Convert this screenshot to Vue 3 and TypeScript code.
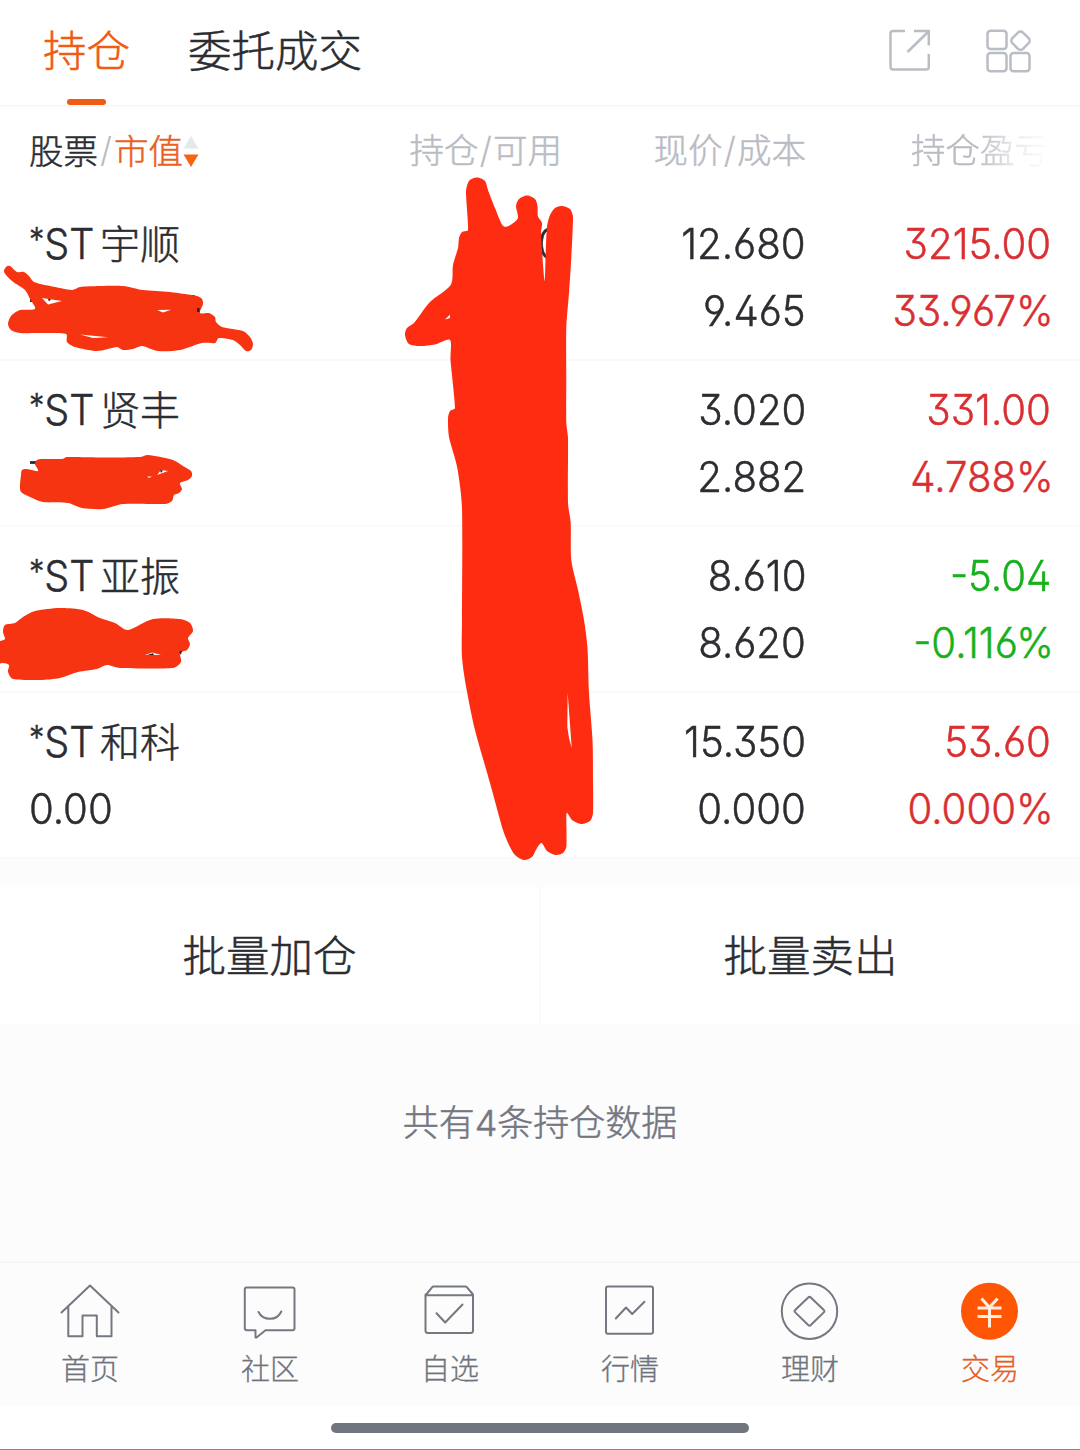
<script setup lang="ts">
interface Holding {
  name: string
  value: string
  qty: string
  price: string
  cost: string
  profit: string
  rate: string
  trend: 'up' | 'down'
}

type Point = [number, number]

const holdings: Holding[] = [
  { name: '宇顺', value: '', qty: '0', price: '12.680', cost: '9.465', profit: '3215.00', rate: '33.967%', trend: 'up' },
  { name: '贤丰', value: '', qty: '', price: '3.020', cost: '2.882', profit: '331.00', rate: '4.788%', trend: 'up' },
  { name: '亚振', value: '', qty: '', price: '8.610', cost: '8.620', profit: '-5.04', rate: '-0.116%', trend: 'down' },
  { name: '和科', value: '0.00', qty: '', price: '15.350', cost: '0.000', profit: '53.60', rate: '0.000%', trend: 'up' },
]

const tabs = [
  { key: 'home', label: '首页' },
  { key: 'community', label: '社区' },
  { key: 'watch', label: '自选' },
  { key: 'market', label: '行情' },
  { key: 'wealth', label: '理财' },
  { key: 'trade', label: '交易' },
]

// Closed Catmull-Rom curve through the points of a marker outline
function outline(flat: number[]): string {
  const p: Point[] = []
  for (let i = 0; i < flat.length; i += 2) p.push([flat[i], flat[i + 1]])
  const n = p.length
  const k = 7
  let d = `M${p[0][0]} ${p[0][1]}`
  for (let i = 0; i < n; i++) {
    const a = p[(i + n - 1) % n]
    const b = p[i]
    const c = p[(i + 1) % n]
    const e = p[(i + 2) % n]
    const len = Math.hypot(c[0] - b[0], c[1] - b[1])
    const t1 = Math.min(1, (2 * len) / Math.hypot(c[0] - a[0], c[1] - a[1]))
    const t2 = Math.min(1, (2 * len) / Math.hypot(e[0] - b[0], e[1] - b[1]))
    d += `C${b[0] + ((c[0] - a[0]) * t1) / k} ${b[1] + ((c[1] - a[1]) * t1) / k} ${c[0] - ((e[0] - b[0]) * t2) / k} ${c[1] - ((e[1] - b[1]) * t2) / k} ${c[0]} ${c[1]}`
  }
  return d + 'Z'
}

const column = outline([
  466, 192, 469, 181, 477, 177.5, 485, 181, 488, 190, 495, 208, 504, 226.5, 517.5, 219, 516, 206, 519, 199, 527, 195.5, 535, 199, 537.5, 206,
  538, 216.5, 542, 223, 541, 233, 544.5, 281, 545.7, 253, 547, 227, 550, 215, 555, 208, 562, 206, 570, 209, 573, 217,
  571, 263, 569, 293, 566.3, 328, 566.3, 380, 566.3, 423, 568, 438, 568, 503, 570.7, 523, 571.3, 560, 578, 590, 584, 620,
  587.5, 648, 589, 693, 592.5, 740, 593, 780, 593, 813, 590, 821, 581, 824, 572, 820, 566.7, 813, 566.5, 830, 566.3, 847, 563, 853,
  555.5, 855, 547, 851, 541.7, 843, 537, 848, 532, 857, 524, 860, 515, 855, 509, 845, 503, 830, 490, 783, 475, 730, 466.7, 690,
  462, 657, 462, 620, 462, 508, 457.3, 468, 449, 437, 448, 418, 450, 411, 455, 408, 450.5, 360, 450, 340, 435, 344.5, 420, 346, 409, 344,
  405, 335, 407, 328, 414, 323, 430, 302, 450.7, 285, 453, 265, 458, 248, 459, 238, 462, 232, 468, 230,
])

const strokes = [
  outline([
    4, 272, 6, 267, 10, 266, 17, 272, 24, 272, 29, 276, 34, 282, 50, 286, 72, 290, 80, 287, 100, 286, 123, 286, 143, 290, 170, 292,
    197, 296, 202, 299, 203, 304, 200, 313, 209, 313, 215, 317, 216, 322, 222, 327, 243, 331, 250, 337, 253, 344, 251, 350, 246, 351,
    240, 345, 233, 340, 219, 338, 215, 343, 202, 343, 180, 350, 158, 351, 142, 346, 133, 349, 123, 350, 117, 347, 97, 351, 75, 347,
    67, 342, 66, 334, 42, 333, 20, 333, 11, 330, 8, 324, 11, 316, 20, 310, 35, 309, 30, 299, 25, 290, 12, 281,
  ]),
  outline([
    21, 475, 22, 470, 27, 469, 38, 471, 35, 464, 37, 460, 42, 459, 62, 459, 67, 457, 105, 457.5, 140, 457, 148, 455, 173, 460, 183, 466,
    191, 471, 192, 476, 188, 480, 180, 483, 182, 489, 179, 493, 174, 495, 172, 501, 165, 504, 123, 504, 103, 509, 82, 508, 68, 503,
    43, 502, 28, 496, 21, 492, 20, 486,
  ]),
  outline([
    -4, 642, 0, 641, 5, 639, 3, 632, 5, 625, 15, 623, 23, 617, 35, 611, 60, 608, 83, 610, 100, 618, 115, 623, 128, 630, 153, 619, 180, 619,
    190, 623, 193, 631, 188, 638, 190, 644, 187, 650, 180, 653, 181, 662, 173, 668, 120, 668, 107, 665, 97, 669, 78, 672, 60, 678,
    40, 680, 13, 679, 8, 672, 9, 665, 3, 663, -4, 663,
  ]),
]
</script>

<template>
  <div class="page">
    <header class="top">
      <nav class="top-tabs">
        <span class="top-tab active">持仓</span>
        <span class="top-tab">委托成交</span>
      </nav>
      <div class="tools">
        <svg width="48" height="48" viewBox="886 26 48 48" class="tool">
          <path d="M905 31H893Q890.500 31 890.500 33.500V66.500Q890.500 69.500 893 69.500H926Q928.800 69.500 928.800 67V54M914 31H928.800V45.500M928.500 31.500L907.500 52" />
        </svg>
        <svg width="52" height="52" viewBox="982 26 52 52" class="tool">
          <rect x="987.500" y="30.800" width="19" height="18.200" rx="3" />
          <rect x="987.500" y="53" width="19" height="18.200" rx="3" />
          <rect x="1010.500" y="53" width="19" height="18.200" rx="3" />
          <rect x="1013" y="33.200" width="15" height="15" rx="3.500" transform="rotate(45 1020.500 40.700)" />
        </svg>
      </div>
    </header>

    <section class="table">
      <div class="row head">
        <div class="h-name">
          <span class="dark">股票</span><span class="slash">/</span><span class="sorted">市值</span>
          <svg class="sort" width="16" height="34" viewBox="0 0 16 34">
            <path d="M8 2L15.500 14.500H.5Z" fill="#e6e8ec" />
            <path d="M.5 20.500H15.500L8 33Z" fill="#f5640f" />
          </svg>
        </div>
        <div class="cell">持仓<i>/</i>可用</div>
        <div class="cell">现价<i>/</i>成本</div>
        <div class="cell fade">持仓盈亏</div>
      </div>

      <div v-for="h in holdings" :key="h.name" class="row item">
        <div class="name-col">
          <div class="line stock"><span class="st"><span class="star">*</span>ST</span><span>{{ h.name }}</span></div>
          <div class="line"><span class="num left">{{ h.value }}</span></div>
        </div>
        <div class="cell">
          <div class="line"><span class="num">{{ h.qty }}</span></div>
        </div>
        <div class="cell">
          <div class="line"><span class="num">{{ h.price }}</span></div>
          <div class="line"><span class="num">{{ h.cost }}</span></div>
        </div>
        <div class="cell" :class="h.trend">
          <div class="line"><span class="num">{{ h.profit }}</span></div>
          <div class="line"><span class="num rate">{{ h.rate }}</span></div>
        </div>
      </div>
    </section>

    <section class="batch">
      <button type="button">批量加仓</button>
      <button type="button">批量卖出</button>
    </section>

    <p class="count">共有<span>4</span>条持仓数据</p>

    <nav class="tabbar">
      <div v-for="t in tabs" :key="t.key" class="tab" :class="{ current: t.key === 'trade' }">
        <svg width="60" height="60" viewBox="0 0 60 60" class="icon">
          <path v-if="t.key === 'home'" d="M1.500 31.500L30 4.500L58.500 31.500M8.300 26V55.200H22.500V34.500H36.800V55.200H51.500V26" />
          <g v-else-if="t.key === 'community'">
            <path d="M6.500 6.500H52.500Q54.500 6.500 54.500 8.500V47Q54.500 49.300 52.500 49.300H25.500L16.500 56.500H15.500V49.300H7Q4.800 49.300 4.800 47V8.500Q4.800 6.500 6.500 6.500Z" />
            <path d="M18.500 31Q22 37.800 30 37.800T41.300 30.500" />
          </g>
          <g v-else-if="t.key === 'watch'">
            <path d="M5.500 14.500L12.200 6.200Q12.700 5.600 13.500 5.600H45.500Q46.300 5.600 46.800 6.200L53 13.500V49.500Q53 52 50.500 52H8Q5.500 52 5.500 49.500V13.500M5.500 14.200H53" />
            <path d="M16.500 32.200L25.200 41.500L42.500 23.500" />
          </g>
          <g v-else-if="t.key === 'market'">
            <rect x="6" y="5.500" width="47" height="47.200" rx="2" />
            <path d="M15.800 37.500L26 26.500L32.200 33L44.500 20.800" />
          </g>
          <g v-else-if="t.key === 'wealth'">
            <circle cx="29.500" cy="30.200" r="27.700" />
            <path d="M28.200 16.500Q29.500 15.200 30.800 16.500L43.800 29Q45 30.200 43.800 31.400L30.800 44Q29.500 45.200 28.200 44L15.200 31.400Q14 30.200 15.200 29Z" />
          </g>
          <g v-else>
            <circle cx="29.500" cy="30.200" r="28.500" class="coin" />
            <path class="yen" d="M21.500 17.500L29.500 26.500L37.500 17.500M17.500 27H41.500M17.500 35.500H41.500M29.500 26.500V46.500" />
          </g>
        </svg>
        <span>{{ t.label }}</span>
      </div>
    </nav>

    <div class="gesture"><div class="pill"></div></div>

    <svg class="marker" width="1080" height="1450" viewBox="0 0 1080 1450">
      <path :d="column" fill="#fe2d12" />
      <path d="M567.700 693L571.700 748L569 738L567.300 727ZM450 314.500L445 319.500L450 318Z" fill="#fff" />
      <path d="M30 299H32V302H30ZM187 295L194 295L200 300L199 312H196Z" fill="#2b2d31" />
      <path d="M30 462.500H40" stroke="#2b2d31" stroke-width="2.800" />
      <path v-for="(d, i) in strokes" :key="i" :d="d" fill="#f63411" />
      <path d="M42 298L62 301L48 304.500ZM157 310L171 309.800L163 312.500ZM80 334.500L108 337.200L93 338ZM157 475L161 470L168 471ZM147 476.500H152L149 478ZM145 655L152 652.500L161 655Z" fill="#fff" />
      <path d="M48 299H51L49 301.500ZM160 470L163 470.500L161 473ZM147 655L153 653.200L154 655ZM179 652L182 650.500L181 655ZM197 308L199.500 308V312H197Z" fill="#3d1712" />
    </svg>
  </div>
</template>

<style>
body {
  background: #fff;
}
</style>

<style scoped>
.page {
  position: relative;
  width: 1080px;
  height: 1450px;
  overflow: hidden;
  display: flex;
  flex-direction: column;
  background: #fcfcfd;
  color: #2b2d31;
  font-family: 'Noto Sans CJK SC', sans-serif;
  font-weight: 300;
  -webkit-text-stroke-width: 0.5px;
}
.top {
  box-sizing: border-box;
  height: 107px;
  flex: none;
  display: flex;
  justify-content: space-between;
  background: #fff;
  border-bottom: 2px solid #f8f8f9;
  padding: 0 46px 0 43px;
}
.top-tabs {
  display: flex;
  gap: 58px;
}
.top-tab {
  display: flex;
  flex-direction: column;
  align-items: center;
  font-size: 43.500px;
  line-height: 97px;
  height: 106px;
}
.top-tab.active {
  color: #ef5c12;
}
.top-tab.active::after {
  content: '';
  width: 39px;
  height: 6px;
  margin-top: 2px;
  border-radius: 3px;
  background: #ef5a14;
}
.tools {
  display: flex;
  gap: 48px;
  padding-top: 26px;
}
.tool {
  fill: none;
  stroke: #b9bdc4;
  stroke-width: 2.500;
}
.table {
  background: #fff;
  flex: none;
}
.row {
  box-sizing: border-box;
  display: grid;
  grid-template-columns: 300px 233px 244px 245px;
  padding-left: 29px;
}
.head {
  height: 88px;
  line-height: 83px;
  font-size: 34.500px;
  color: #b9bcc3;
}
.head i {
  font-style: normal;
  font-family: Inter, sans-serif;
  font-size: 36px;
  margin: 0 1px;
  -webkit-text-stroke-width: 0;
}
.h-name {
  display: flex;
  align-items: center;
  height: 85px;
}
.dark {
  color: #2b2d31;
}
.slash {
  font-family: Inter, sans-serif;
  margin: 0 2px;
  -webkit-text-stroke-width: 0;
}
.sorted {
  color: #e9601a;
}
.sort {
  margin-top: 2px;
}
.cell {
  text-align: right;
}
.fade {
  padding-right: 2px;
  -webkit-mask-image: linear-gradient(90deg, #000 0 170px, rgba(0, 0, 0, 0.3) 210px, transparent 245px);
  mask-image: linear-gradient(90deg, #000 0 170px, rgba(0, 0, 0, 0.3) 210px, transparent 245px);
}
.item {
  height: 166px;
  padding-top: 14px;
  border-bottom: 2px solid #fafafb;
}
.line {
  height: 67px;
  line-height: 67px;
  font-size: 40px;
  white-space: nowrap;
}
.stock {
  display: flex;
}
.st {
  font-family: Inter, sans-serif;
  font-size: 42.500px;
  width: 71px;
  transform: translateY(1px) scaleX(0.93);
  transform-origin: left;
}
.star {
  font-size: 33px;
  vertical-align: 8px;
  line-height: 1;
}
.num {
  display: inline-block;
  font-family: Inter, sans-serif;
  font-size: 42.500px;
  font-weight: 350;
  font-feature-settings: 'cv09', 'ss01';
  transform: scaleX(0.945);
  transform-origin: right;
}
.num.left {
  transform-origin: left;
}
.num.rate {
  transform: translateX(3px) scaleX(0.945);
}
.up {
  color: #d92f33;
}
.down {
  color: #16b11c;
}
.batch {
  flex: none;
  display: flex;
  height: 137px;
  margin-top: 28px;
  background: #fff;
}
.batch button {
  flex: 1;
  border: 0;
  background: none;
  padding: 0 0 5px;
  font: inherit;
  font-size: 43.500px;
  color: #2b2d31;
  -webkit-text-stroke-width: 0.5px;
}
.batch button + button {
  border-left: 2px solid #fbfbfc;
}
.count {
  flex: 1;
  margin: 0;
  text-align: center;
  line-height: 192px;
  font-size: 36px;
  color: #74777f;
}
.count span {
  font-family: Inter, sans-serif;
}
.tabbar {
  box-sizing: border-box;
  flex: none;
  display: flex;
  height: 145px;
  border-top: 2px solid #f6f6f7;
  padding-top: 18px;
}
.tab {
  flex: 1;
  display: flex;
  flex-direction: column;
  align-items: center;
  font-size: 29px;
  line-height: 52px;
  color: #6f737b;
  -webkit-text-stroke-width: 0.3px;
}
.icon {
  flex: none;
  fill: none;
  stroke: #747880;
  stroke-width: 2;
  stroke-linecap: round;
  stroke-linejoin: round;
}
.coin {
  fill: #ff5606;
  stroke: none;
}
.yen {
  stroke: #ffeeda;
  stroke-width: 3;
  stroke-linecap: butt;
}
.current {
  color: #e2601f;
}
.gesture {
  box-sizing: border-box;
  flex: none;
  height: 44px;
  padding-top: 17px;
  background: #fff;
  border-bottom: 1px solid #85878b;
}
.pill {
  width: 418px;
  height: 10px;
  margin: 0 auto;
  border-radius: 5px;
  background: #71757d;
}
.marker {
  position: absolute;
  left: 0;
  top: 0;
  pointer-events: none;
}
</style>
